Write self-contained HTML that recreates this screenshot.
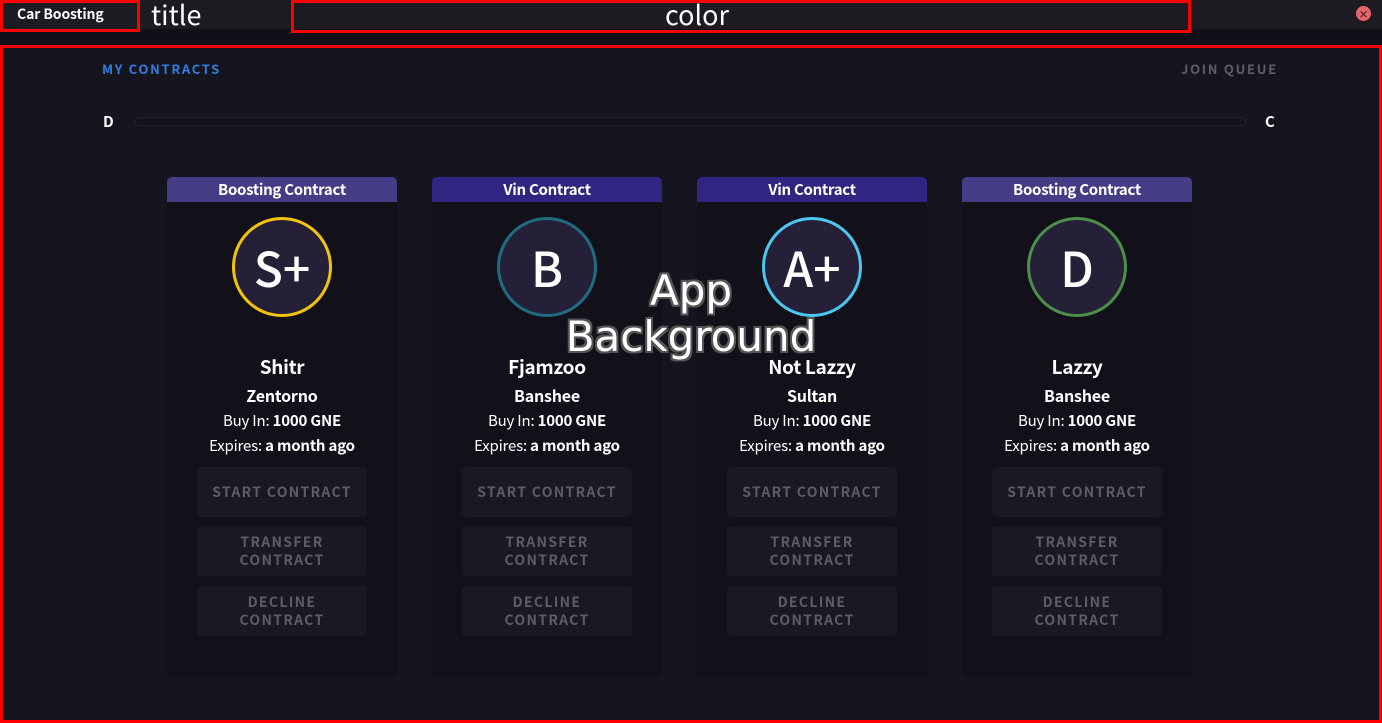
<!DOCTYPE html>
<html><head><meta charset="utf-8"><style>
*{margin:0;padding:0;box-sizing:border-box}
body{width:1382px;height:723px;background:#0f0e14;font-family:"Noto Sans CJK JP","DejaVu Sans",sans-serif;position:relative;overflow:hidden;color:#fff}
.top{position:absolute;left:0;top:0;width:1382px;height:29px;background:#1c1b21}
.gap{position:absolute;left:0;top:29px;width:1382px;height:16px;background:#111018}
.main{position:absolute;left:0;top:45px;width:1382px;height:678px;background:#16151f;border:3px solid #ff0000}
.rb{position:absolute;border:3px solid #ff0000}
.t{position:absolute}
.card{position:absolute;top:177px;width:230px;height:500px;background:#121119;border-radius:5px;overflow:hidden}
.hd{height:25px;text-align:center;font-size:15px;font-weight:bold;line-height:25px;letter-spacing:-0.3px}
.circ{position:absolute;left:65px;top:40px;width:100px;height:100px;border-radius:50%;background:#252038;border:3px solid;text-align:center;line-height:92px;font-size:48px;font-weight:500}
.nm{position:absolute;top:176px;width:100%;text-align:center;font-size:19px;font-weight:bold;letter-spacing:-0.3px}
.md{position:absolute;top:206px;width:100%;text-align:center;font-size:16px;font-weight:bold;letter-spacing:-0.2px}
.ln{position:absolute;width:100%;text-align:center;font-size:15px;letter-spacing:-0.2px}
.btn{position:absolute;left:30px;width:170px;height:50px;background:#1a1921;border-radius:4px;color:#5e5c66;font-size:14px;font-weight:bold;letter-spacing:1.3px;text-align:center;display:flex;align-items:center;justify-content:center;line-height:18px}
</style></head><body>
<div class="top"></div><div class="gap"></div>
<div class="main"></div>
<div class="rb" style="left:0;top:0;width:140px;height:32px"></div>
<div class="t" style="left:17px;top:4px;font-size:14px;font-weight:bold;letter-spacing:-0.1px">Car Boosting</div>
<div class="t" style="left:151px;top:-6px;font-size:27px">title</div>
<div class="rb" style="left:291px;top:0;width:900px;height:33px"></div>
<div class="t" style="left:665px;top:-6px;font-size:27px">color</div>
<div class="t" style="left:1356px;top:6px;width:15px;height:15px;border-radius:50%;background:#e86468;color:#3a1a1c;font-size:10px;line-height:15px;text-align:center;font-weight:bold">×</div>
<div class="t" style="left:102px;top:59px;font-size:13px;font-weight:bold;color:#2f7fe0;letter-spacing:1.7px">MY CONTRACTS</div>
<div class="t" style="left:1181px;top:59px;font-size:13px;font-weight:bold;color:#5e5c66;letter-spacing:1.7px">JOIN QUEUE</div>
<div class="t" style="left:103px;top:111px;font-size:15px;font-weight:bold">D</div>
<div class="t" style="left:134px;top:117px;width:1112px;height:9px;border:1px solid #24232b;border-radius:5px;background:#141319"></div>
<div class="t" style="left:1265px;top:111px;font-size:15px;font-weight:bold">C</div>

<div class="card" style="left:167px"><div class="hd" style="background:#443c84">Boosting Contract</div><div class="circ" style="border-color:#f2c40c">S+</div><div class="nm">Shitr</div><div class="md">Zentorno</div><div class="ln" style="top:233px">Buy In: <b>1000 GNE</b></div><div class="ln" style="top:258px">Expires: <b>a month ago</b></div><div class="btn" style="top:290px">START CONTRACT</div><div class="btn" style="top:349px">TRANSFER<br>CONTRACT</div><div class="btn" style="top:409px">DECLINE<br>CONTRACT</div></div>
<div class="card" style="left:432px"><div class="hd" style="background:#2e2680">Vin Contract</div><div class="circ" style="border-color:#1f6c80">B</div><div class="nm">Fjamzoo</div><div class="md">Banshee</div><div class="ln" style="top:233px">Buy In: <b>1000 GNE</b></div><div class="ln" style="top:258px">Expires: <b>a month ago</b></div><div class="btn" style="top:290px">START CONTRACT</div><div class="btn" style="top:349px">TRANSFER<br>CONTRACT</div><div class="btn" style="top:409px">DECLINE<br>CONTRACT</div></div>
<div class="card" style="left:697px"><div class="hd" style="background:#2e2680">Vin Contract</div><div class="circ" style="border-color:#4cc8f0">A+</div><div class="nm">Not Lazzy</div><div class="md">Sultan</div><div class="ln" style="top:233px">Buy In: <b>1000 GNE</b></div><div class="ln" style="top:258px">Expires: <b>a month ago</b></div><div class="btn" style="top:290px">START CONTRACT</div><div class="btn" style="top:349px">TRANSFER<br>CONTRACT</div><div class="btn" style="top:409px">DECLINE<br>CONTRACT</div></div>
<div class="card" style="left:962px"><div class="hd" style="background:#443c84">Boosting Contract</div><div class="circ" style="border-color:#4a9048">D</div><div class="nm">Lazzy</div><div class="md">Banshee</div><div class="ln" style="top:233px">Buy In: <b>1000 GNE</b></div><div class="ln" style="top:258px">Expires: <b>a month ago</b></div><div class="btn" style="top:290px">START CONTRACT</div><div class="btn" style="top:349px">TRANSFER<br>CONTRACT</div><div class="btn" style="top:409px">DECLINE<br>CONTRACT</div></div>

<div class="t" style="left:541px;top:268px;width:300px;text-align:center;font-family:'DejaVu Sans',sans-serif;font-size:42px;line-height:46px;color:#fff;text-shadow:-2px -2px 0 #555,2px -2px 0 #555,-2px 2px 0 #555,2px 2px 0 #555,0 2px 0 #555,0 -2px 0 #555,2px 0 0 #555,-2px 0 0 #555">App<br>Background</div>
</body></html>
